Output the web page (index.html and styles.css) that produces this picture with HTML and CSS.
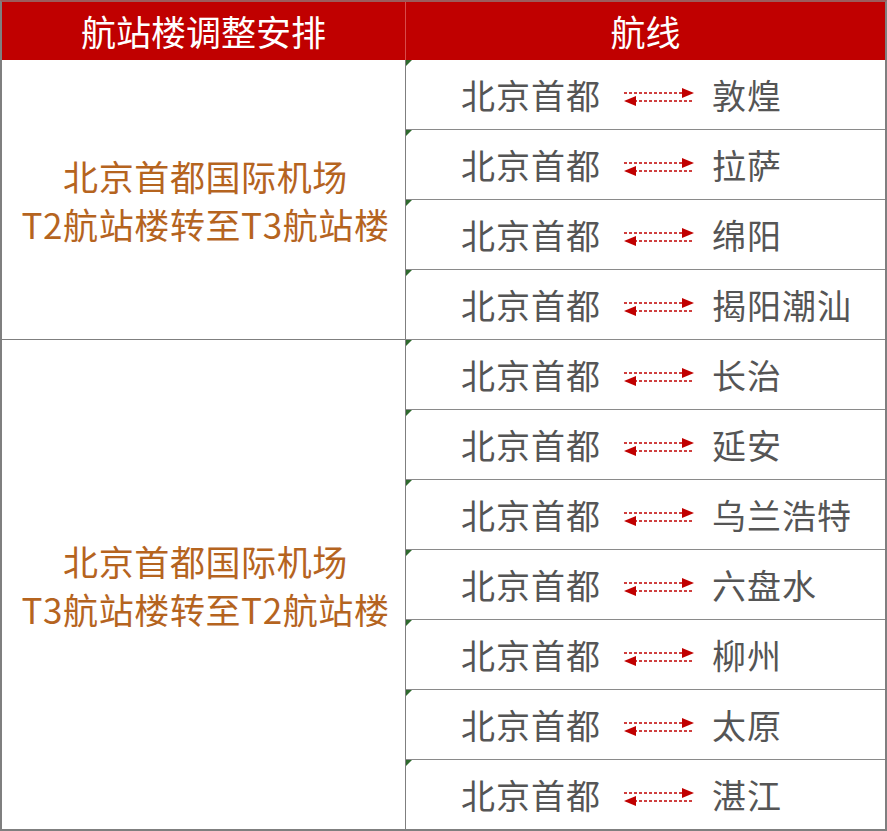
FILE: index.html
```html
<!DOCTYPE html>
<html lang="zh-CN">
<head>
<meta charset="utf-8">
<link rel="stylesheet" href="styles.css">
<title>航站楼调整安排</title>
</head>
<body>
<div class="table">
  <div class="head head-left">航站楼调整安排</div>
  <div class="head head-right">航线</div>

  <div class="group g1">
    <div>北京首都国际机场</div>
    <div>T2航站楼转至T3航站楼</div>
  </div>
  <div class="group g2">
    <div>北京首都国际机场</div>
    <div>T3航站楼转至T2航站楼</div>
  </div>

  <div class="route r1"><span class="from">北京首都</span><svg class="arrow" viewBox="0 0 74 18"><line x1="2" y1="5" x2="62" y2="5"/><polygon points="60,0 72,5 60,10"/><line x1="12" y1="13" x2="72" y2="13"/><polygon points="14,8 2,13 14,18"/></svg><span class="to">敦煌</span></div>
  <div class="route r2"><span class="from">北京首都</span><svg class="arrow" viewBox="0 0 74 18"><line x1="2" y1="5" x2="62" y2="5"/><polygon points="60,0 72,5 60,10"/><line x1="12" y1="13" x2="72" y2="13"/><polygon points="14,8 2,13 14,18"/></svg><span class="to">拉萨</span></div>
  <div class="route r3"><span class="from">北京首都</span><svg class="arrow" viewBox="0 0 74 18"><line x1="2" y1="5" x2="62" y2="5"/><polygon points="60,0 72,5 60,10"/><line x1="12" y1="13" x2="72" y2="13"/><polygon points="14,8 2,13 14,18"/></svg><span class="to">绵阳</span></div>
  <div class="route r4"><span class="from">北京首都</span><svg class="arrow" viewBox="0 0 74 18"><line x1="2" y1="5" x2="62" y2="5"/><polygon points="60,0 72,5 60,10"/><line x1="12" y1="13" x2="72" y2="13"/><polygon points="14,8 2,13 14,18"/></svg><span class="to">揭阳潮汕</span></div>
  <div class="route r5"><span class="from">北京首都</span><svg class="arrow" viewBox="0 0 74 18"><line x1="2" y1="5" x2="62" y2="5"/><polygon points="60,0 72,5 60,10"/><line x1="12" y1="13" x2="72" y2="13"/><polygon points="14,8 2,13 14,18"/></svg><span class="to">长治</span></div>
  <div class="route r6"><span class="from">北京首都</span><svg class="arrow" viewBox="0 0 74 18"><line x1="2" y1="5" x2="62" y2="5"/><polygon points="60,0 72,5 60,10"/><line x1="12" y1="13" x2="72" y2="13"/><polygon points="14,8 2,13 14,18"/></svg><span class="to">延安</span></div>
  <div class="route r7"><span class="from">北京首都</span><svg class="arrow" viewBox="0 0 74 18"><line x1="2" y1="5" x2="62" y2="5"/><polygon points="60,0 72,5 60,10"/><line x1="12" y1="13" x2="72" y2="13"/><polygon points="14,8 2,13 14,18"/></svg><span class="to">乌兰浩特</span></div>
  <div class="route r8"><span class="from">北京首都</span><svg class="arrow" viewBox="0 0 74 18"><line x1="2" y1="5" x2="62" y2="5"/><polygon points="60,0 72,5 60,10"/><line x1="12" y1="13" x2="72" y2="13"/><polygon points="14,8 2,13 14,18"/></svg><span class="to">六盘水</span></div>
  <div class="route r9"><span class="from">北京首都</span><svg class="arrow" viewBox="0 0 74 18"><line x1="2" y1="5" x2="62" y2="5"/><polygon points="60,0 72,5 60,10"/><line x1="12" y1="13" x2="72" y2="13"/><polygon points="14,8 2,13 14,18"/></svg><span class="to">柳州</span></div>
  <div class="route r10"><span class="from">北京首都</span><svg class="arrow" viewBox="0 0 74 18"><line x1="2" y1="5" x2="62" y2="5"/><polygon points="60,0 72,5 60,10"/><line x1="12" y1="13" x2="72" y2="13"/><polygon points="14,8 2,13 14,18"/></svg><span class="to">太原</span></div>
  <div class="route r11"><span class="from">北京首都</span><svg class="arrow" viewBox="0 0 74 18"><line x1="2" y1="5" x2="62" y2="5"/><polygon points="60,0 72,5 60,10"/><line x1="12" y1="13" x2="72" y2="13"/><polygon points="14,8 2,13 14,18"/></svg><span class="to">湛江</span></div>
</div>
</body>
</html>
```

FILE: styles.css
```css
html, body {
  margin: 0;
  padding: 0;
  background: #ffffff;
}

body {
  font-family: "Noto Sans CJK SC", "Microsoft YaHei", sans-serif;
}

.table {
  width: 887px;
  height: 831px;
  box-sizing: border-box;
  border-left: 2px solid #7f7f7f;
  border-right: 2px solid #7f7f7f;
  border-bottom: 2px solid #7f7f7f;
  border-top: 2px solid #9c5c5c;
  display: grid;
  grid-template-columns: 404px 1fr;
  grid-template-rows: 58px repeat(10, 70px) 69px;
}

.head {
  background: #c00000;
  color: #ffffff;
  font-size: 35px;
  display: flex;
  align-items: center;
  justify-content: center;
  line-height: 1;
  padding-bottom: 2px;
  box-sizing: border-box;
}

.head-left {
  grid-column: 1;
  grid-row: 1;
  border-right: 1px solid #d84a4a;
}

.head-right {
  grid-column: 2;
  grid-row: 1;
}

.group {
  grid-column: 1;
  box-sizing: border-box;
  border-right: 1px solid #7f7f7f;
  border-bottom: 1px solid #7f7f7f;
  color: #b5641f;
  font-size: 35px;
  line-height: 48px;
  letter-spacing: 0.6px;
  display: flex;
  flex-direction: column;
  align-items: center;
  justify-content: center;
  padding-left: 4px;
}

.g1 { grid-row: 2 / span 4; }
.g2 { grid-row: 6 / span 7; border-bottom: none; }

.route {
  grid-column: 2;
  position: relative;
  box-sizing: border-box;
  border-bottom: 1px solid #8a8a8a;
  display: flex;
  align-items: center;
  padding-left: 55px;
  color: #555555;
  font-size: 34px;
  line-height: 1;
}

.route::before {
  content: "";
  position: absolute;
  left: 0;
  top: 0;
  width: 0;
  height: 0;
  border-top: 6px solid #2d6a2d;
  border-right: 6px solid transparent;
}

.r11 { border-bottom: none; }

.r1 { grid-row: 2; }
.r2 { grid-row: 3; }
.r3 { grid-row: 4; }
.r4 { grid-row: 5; }
.r5 { grid-row: 6; }
.r6 { grid-row: 7; }
.r7 { grid-row: 8; }
.r8 { grid-row: 9; }
.r9 { grid-row: 10; }
.r10 { grid-row: 11; }
.r11 { grid-row: 12; }

.from {
  width: 161px;
  letter-spacing: 1px;
}

.arrow {
  width: 74px;
  height: 18px;
  margin-right: 16px;
  margin-top: 4px;
}

.arrow line {
  stroke: #c00000;
  stroke-width: 1.6;
  stroke-dasharray: 3 2;
}

.arrow polygon {
  fill: #c00000;
}

.to {
  letter-spacing: 1px;
}
```
